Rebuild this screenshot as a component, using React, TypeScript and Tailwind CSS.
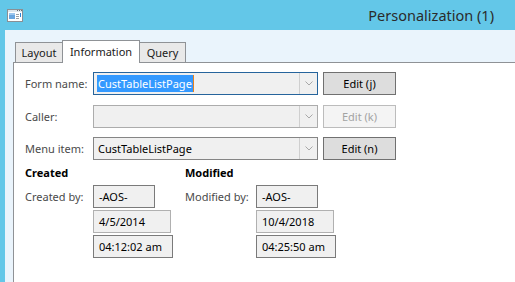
import React from "react";

function Chevron() {
  return (
    <svg width="8" height="5" viewBox="0 0 8 5" className="block">
      <path d="M0.5 0.5 L4 4 L7.5 0.5" fill="none" stroke="#a8a8a8" strokeWidth="1" />
    </svg>
  );
}

function Combo({ border, children }: { border: string; children?: React.ReactNode }) {
  return (
    <div className={`w-[225px] h-[23px] border ${border} bg-[#f0f0f0] flex`}>
      <div className="flex-1 flex items-center pl-[4px] text-black">{children}</div>
      <div className="w-[18px] border-l border-[#cfcfcf] flex items-center justify-center">
        <Chevron />
      </div>
    </div>
  );
}

function Btn({ children, disabled }: { children: React.ReactNode; disabled?: boolean }) {
  return (
    <div
      className={
        disabled
          ? "ml-[5px] w-[73px] h-[23px] border border-[#bcbcbc] bg-[#f4f4f4] text-[#a3a3a3] flex items-center justify-center"
          : "ml-[5px] w-[73px] h-[23px] border border-[#707070] bg-[#dddddd] text-black flex items-center justify-center"
      }
    >
      {children}
    </div>
  );
}

function Box({ w, border, children }: { w: string; border: string; children: React.ReactNode }) {
  return (
    <div className={`${w} h-[23px] border ${border} bg-[#f0f0f0] flex items-center pl-[5px] text-black`}>
      {children}
    </div>
  );
}

function WindowIcon() {
  return (
    <svg width="16" height="13" viewBox="0 0 16 13" className="block">
      <rect x="0.5" y="0.5" width="15" height="12" fill="#ffffff" stroke="#8a8f94" />
      <rect x="1" y="1" width="14" height="2" fill="#dfe6ec" />
      <rect x="10" y="1" width="1" height="1" fill="#6a6f74" />
      <rect x="12" y="1" width="1" height="1" fill="#6a6f74" />
      <rect x="14" y="1" width="1" height="1" fill="#6a6f74" />
      <rect x="2" y="4" width="6" height="6" fill="#6aa6df" />
      <rect x="2" y="4" width="6" height="2" fill="#9cc6ee" />
      <rect x="9" y="5" width="3" height="1" fill="#9aa0a6" />
      <rect x="9" y="7" width="3" height="1" fill="#9aa0a6" />
      <rect x="9" y="9" width="3" height="1" fill="#9aa0a6" />
      <rect x="13" y="4" width="1" height="4" fill="#2f86d6" />
    </svg>
  );
}

export default function App() {
  return (
    <div className="w-[515px] h-[282px] bg-[#63c7e8] flex flex-col overflow-hidden font-['Noto_Sans',sans-serif] text-[11px] leading-[15px] whitespace-nowrap">
      <div className="h-[30px] flex items-center justify-between pl-[7px] pr-[21px]">
        <WindowIcon />
        <div className="text-[14.5px] leading-[20px] text-[#2b2b2b] -mt-[1px]">Personalization (1)</div>
      </div>
      <div className="flex-1 ml-[5px] bg-[#eaf4fc] pt-[10px] pl-[8px] flex flex-col">
        <div className="flex items-end h-[22px] ml-[2px] relative z-10">
          <div className="w-[47px] h-[20px] border-l border-t border-[#8f9296] bg-[#e9e9e9] flex items-center justify-center text-[#1a1a1a]">
            Layout
          </div>
          <div className="w-[78px] h-[23px] -mb-[1px] border-l border-t border-r border-[#8f9296] bg-white flex items-start pt-[3px] justify-center text-[#1a1a1a]">
            Information
          </div>
          <div className="w-[46px] h-[20px] border-t border-r border-[#8f9296] bg-[#e9e9e9] flex items-center justify-center text-[#1a1a1a]">
            Query
          </div>
        </div>
        <div className="flex-1 bg-white border-l border-t border-[#8f9296] pt-[9px] pl-[11px] flex flex-col text-[#4a4a4a]">
          <div className="flex items-center h-[23px]">
            <div className="w-[68px]">Form name:</div>
            <div className="w-[225px] h-[23px] border border-[#26649c] bg-[#f0f0f0] flex">
              <div className="flex-1 flex items-center pl-[3px]">
                <span className="bg-[#3399ff] text-white px-[1px] leading-[17px]">CustTableListPage</span>
                <span className="w-[1px] h-[17px] bg-[#e8821e]" />
              </div>
              <div className="w-[18px] border-l border-[#cfcfcf] flex items-center justify-center">
                <Chevron />
              </div>
            </div>
            <Btn>Edit (j)</Btn>
          </div>
          <div className="flex items-center h-[23px] mt-[10px]">
            <div className="w-[68px]">Caller:</div>
            <Combo border="border-[#acacac]" />
            <Btn disabled>Edit (k)</Btn>
          </div>
          <div className="flex items-center h-[23px] mt-[9px]">
            <div className="w-[68px]">Menu item:</div>
            <Combo border="border-[#858585]">CustTableListPage</Combo>
            <Btn>Edit (n)</Btn>
          </div>
          <div className="flex mt-[5px]">
            <div className="w-[160px] flex flex-col">
              <div className="font-bold text-black h-[15px]">Created</div>
              <div className="flex mt-[5px]">
                <div className="w-[68px] h-[23px] flex items-center">Created by:</div>
                <div className="flex flex-col gap-[2px]">
                  <Box w="w-[62px]" border="border-[#7a7a7a]">-AOS-</Box>
                  <Box w="w-[78px]" border="border-[#b0b0b0]">4/5/2014</Box>
                  <Box w="w-[80px]" border="border-[#7a7a7a]">04:12:02 am</Box>
                </div>
              </div>
            </div>
            <div className="flex flex-col">
              <div className="font-bold text-black h-[15px]">Modified</div>
              <div className="flex mt-[5px]">
                <div className="w-[71px] h-[23px] flex items-center">Modified by:</div>
                <div className="flex flex-col gap-[2px]">
                  <Box w="w-[62px]" border="border-[#7a7a7a]">-AOS-</Box>
                  <Box w="w-[78px]" border="border-[#b0b0b0]">10/4/2018</Box>
                  <Box w="w-[80px]" border="border-[#7a7a7a]">04:25:50 am</Box>
                </div>
              </div>
            </div>
          </div>
        </div>
      </div>
    </div>
  );
}
